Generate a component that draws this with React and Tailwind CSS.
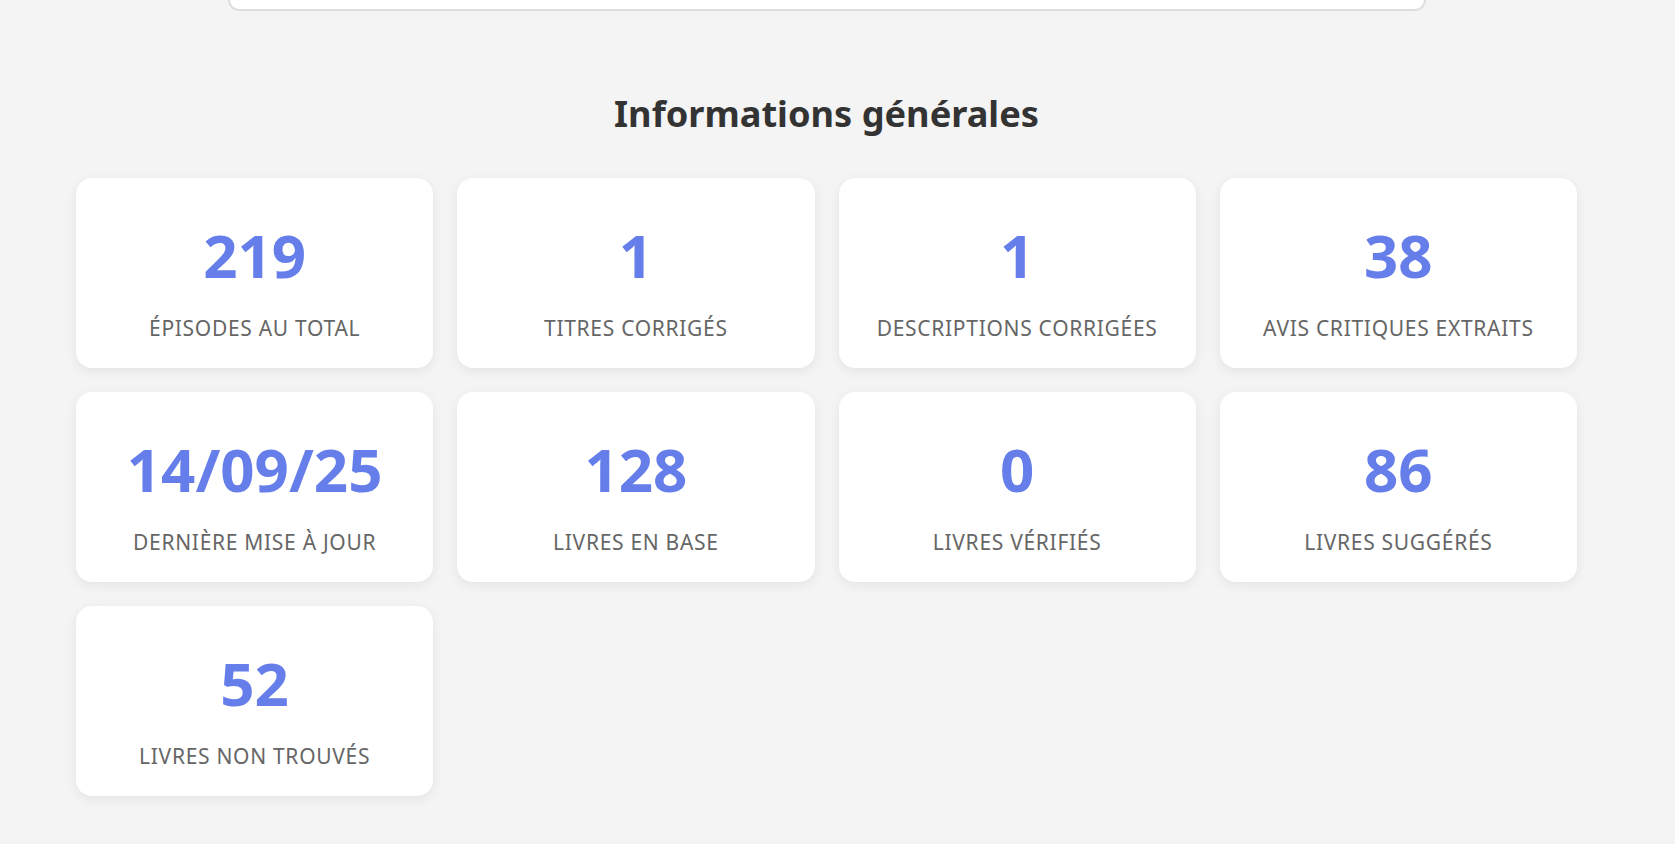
import React from "react";

const stats = [
  ["219", "Épisodes au total"],
  ["1", "Titres corrigés"],
  ["1", "Descriptions corrigées"],
  ["38", "Avis critiques extraits"],
  ["14/09/25", "Dernière mise à jour"],
  ["128", "Livres en base"],
  ["0", "Livres vérifiés"],
  ["86", "Livres suggérés"],
  ["52", "Livres non trouvés"],
];

export default function App() {
  return (
    <div
      className="min-h-[844px] w-full bg-[#f4f4f4]"
      style={{ fontFamily: '"Noto Sans", "Open Sans", sans-serif' }}
    >
      <div className="ml-[76px] flex w-[1501px] flex-col">
        <div className="mx-auto h-[11px] w-[1198px] rounded-b-[18px] border-x-2 border-b-2 border-[#dedede] bg-white" />
        <h2 className="mt-[81px] text-center text-[36.2px] font-bold leading-[1.2] text-[#333]">
          Informations générales
        </h2>
        <div className="mt-[43px] grid grid-cols-4 gap-x-[24px] gap-y-[24px]">
          {stats.map(([n, l], i) => (
            <div
              key={i}
              className="flex h-[190px] flex-col items-center justify-center rounded-[16px] bg-white pt-[17px] shadow-[0_3px_12px_rgba(0,0,0,0.07)]"
            >
              <div className="text-[60px] font-bold leading-none text-[#667eea]">{n}</div>
              <div className="mt-[33px] text-[21px] uppercase leading-none tracking-[0.7px] text-[#666]">
                {l}
              </div>
            </div>
          ))}
        </div>
      </div>
    </div>
  );
}
